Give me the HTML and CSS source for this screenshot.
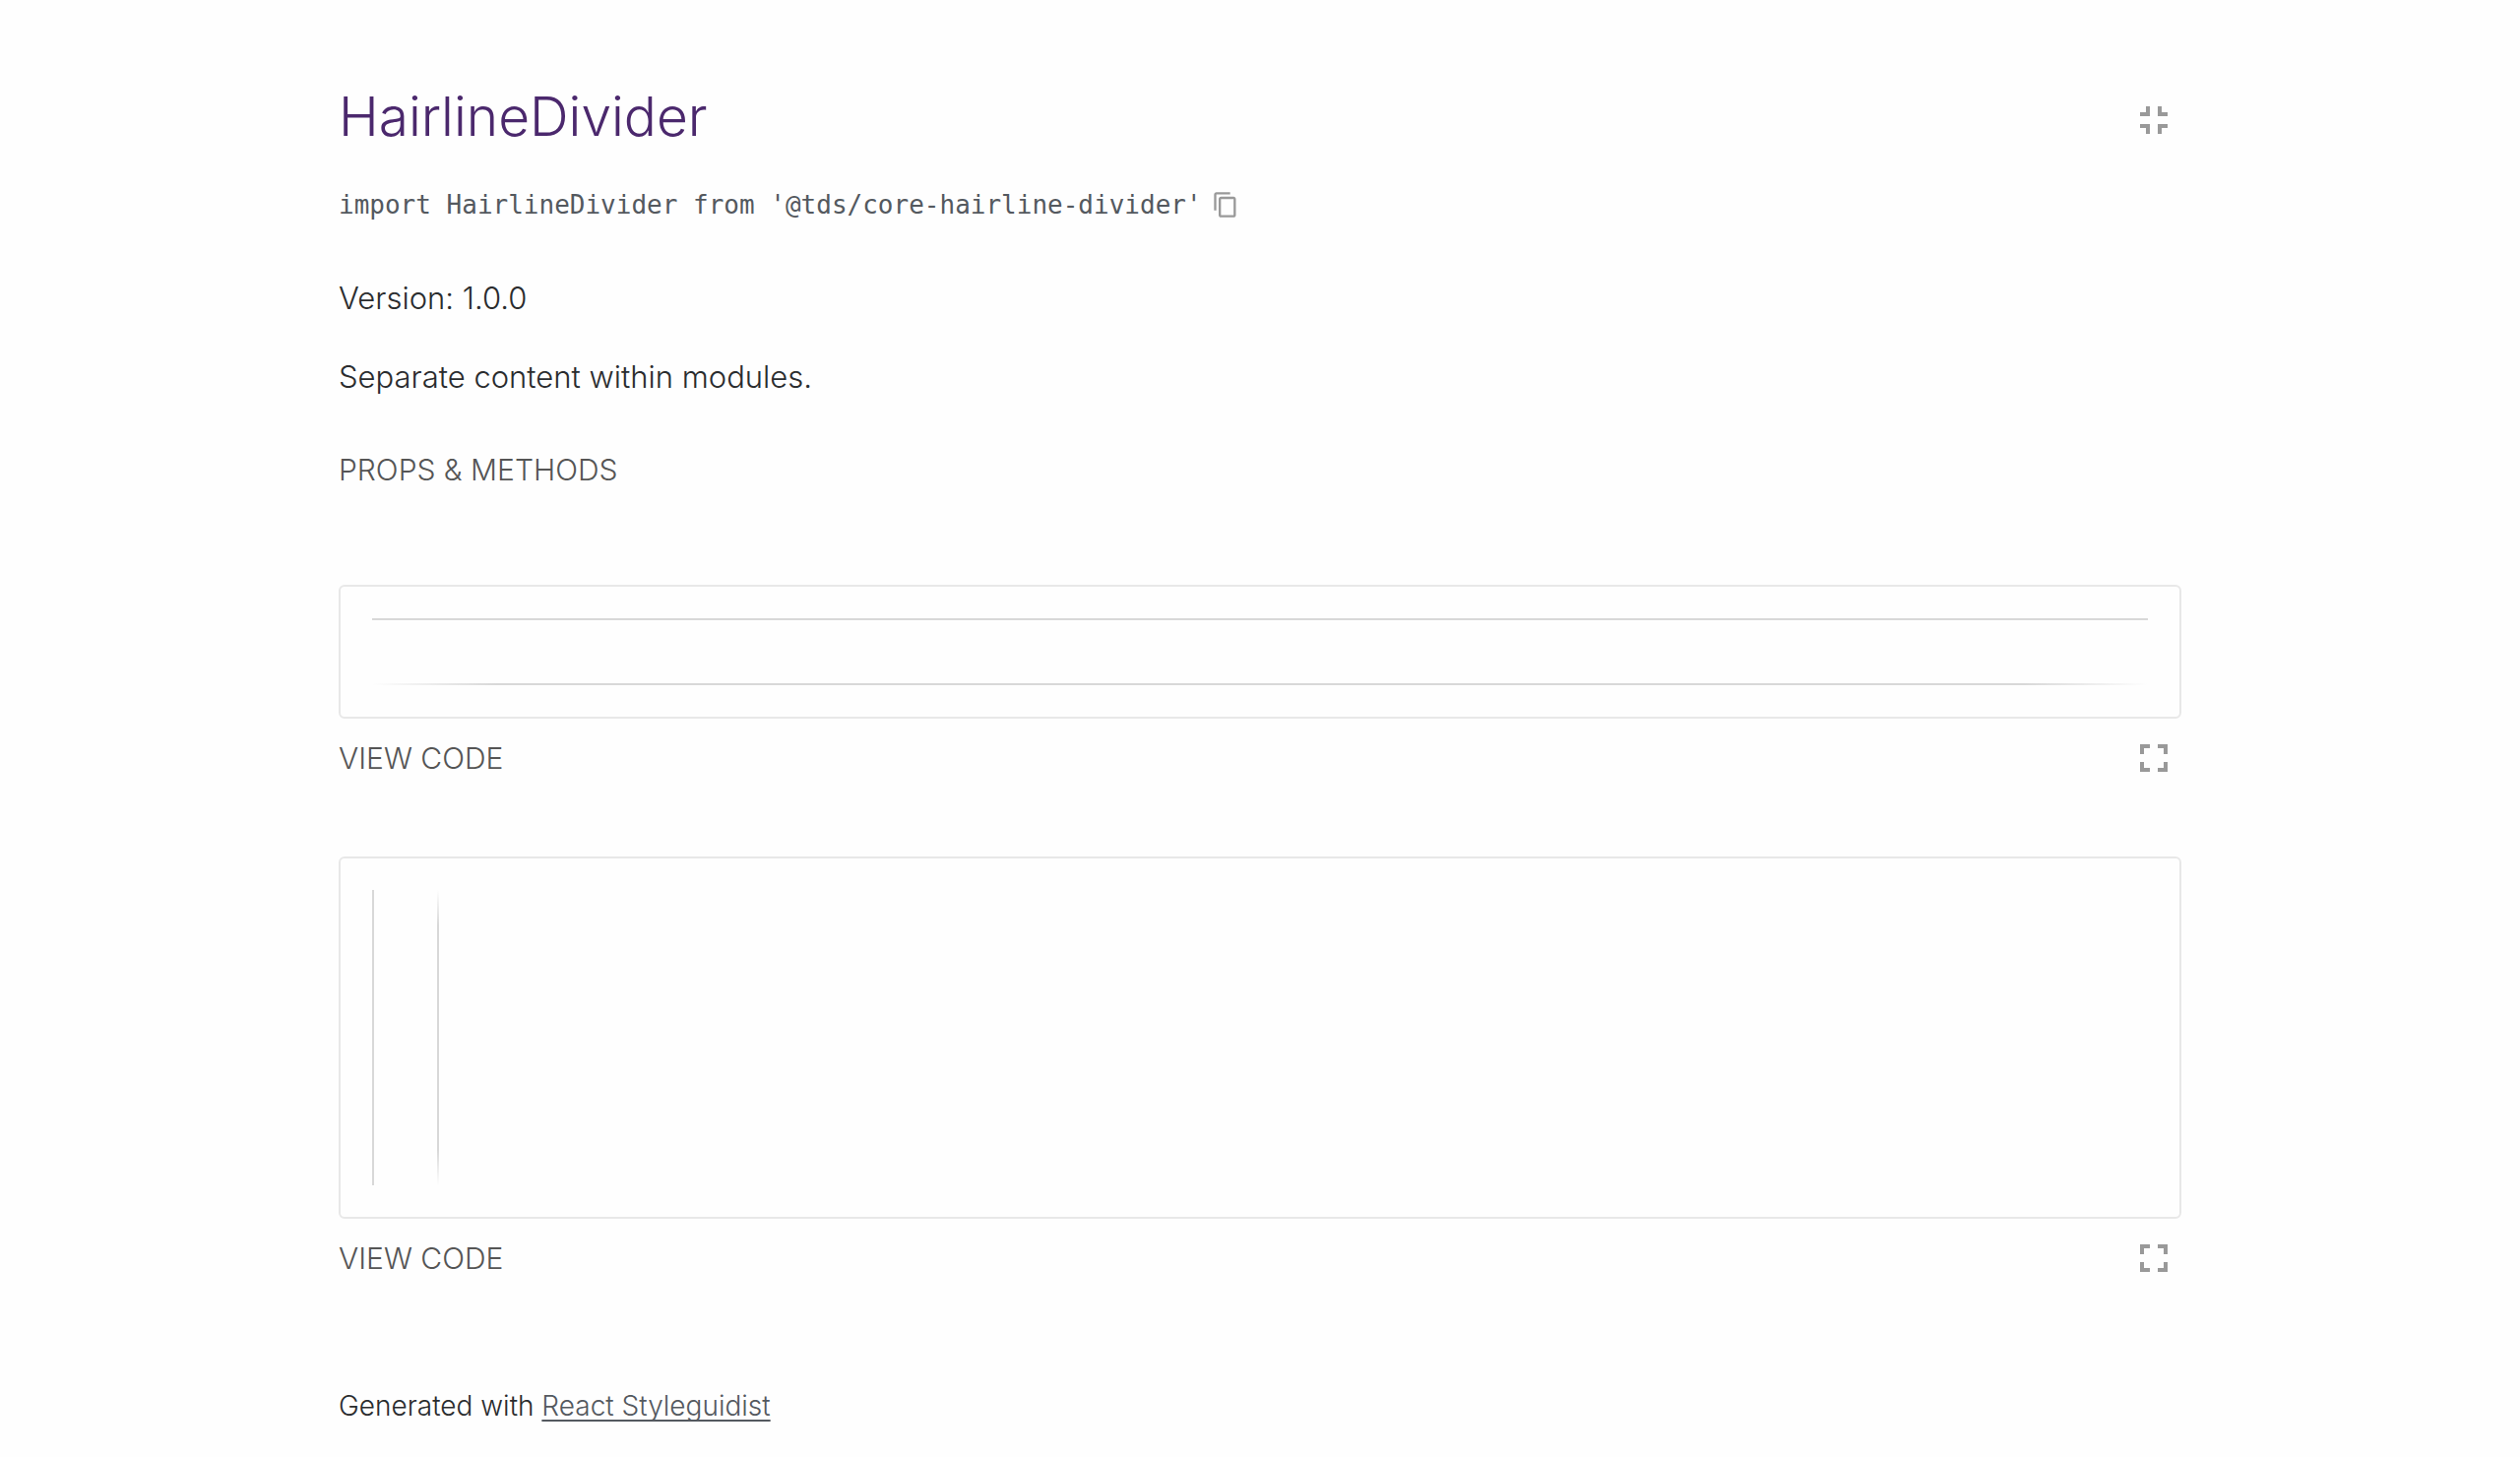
FILE: index.html
```
<!DOCTYPE html>
<html lang="en">
<head>
<meta charset="utf-8">
<meta name="viewport" content="width=device-width, initial-scale=1">
<title>HairlineDivider</title>
<link rel="stylesheet" href="styles.css">
</head>
<body>
<main class="page">
  <section class="component">
    <header class="component-header">
      <h1 class="component-title">HairlineDivider</h1>
      <button class="icon-button header-button" type="button" aria-label="Exit isolation mode">
        <svg class="icon" viewBox="0 0 24 24" aria-hidden="true"><path d="M5 16h3v3h2v-5H5v2zm3-8H5v2h5V5H8v3zm6 11h2v-3h3v-2h-5v5zm2-11V5h-2v5h5V8h-3z"/></svg>
      </button>
    </header>
    <div class="import">
      <code class="import-code">import HairlineDivider from '@tds/core-hairline-divider'</code>
      <button class="icon-button" type="button" aria-label="Copy to clipboard">
        <svg class="icon icon-small" viewBox="0 0 24 24" aria-hidden="true"><path d="M16 1H4c-1.1 0-2 .9-2 2v14h2V3h12V1zm3 4H8c-1.1 0-2 .9-2 2v14c0 1.1.9 2 2 2h11c1.1 0 2-.9 2-2V7c0-1.1-.9-2-2-2zm0 16H8V7h11v14z"/></svg>
      </button>
    </div>
    <div class="description">
      <p class="text">Version: 1.0.0</p>
      <p class="text">Separate content within modules.</p>
    </div>
    <button class="tab-button" type="button">PROPS &amp; METHODS</button>
  </section>

  <div class="examples">
    <section class="example">
      <div class="preview preview-rows">
        <hr class="divider">
        <hr class="divider divider-gradient">
      </div>
      <div class="toolbar">
        <button class="tab-button" type="button">VIEW CODE</button>
        <button class="icon-button" type="button" aria-label="Open isolated">
          <svg class="icon" viewBox="0 0 24 24" aria-hidden="true"><path d="M7 14H5v5h5v-2H7v-3zm-2-4h2V7h3V5H5v5zm12 7h-3v2h5v-5h-2v3zM14 5v2h3v3h2V5h-5z"/></svg>
        </button>
      </div>
    </section>
    <section class="example">
      <div class="preview preview-columns">
        <hr class="divider-vertical">
        <hr class="divider-vertical divider-vertical-gradient">
      </div>
      <div class="toolbar">
        <button class="tab-button" type="button">VIEW CODE</button>
        <button class="icon-button" type="button" aria-label="Open isolated">
          <svg class="icon" viewBox="0 0 24 24" aria-hidden="true"><path d="M7 14H5v5h5v-2H7v-3zm-2-4h2V7h3V5H5v5zm12 7h-3v2h5v-5h-2v3zM14 5v2h3v3h2V5h-5z"/></svg>
        </button>
      </div>
    </section>
  </div>

  <footer class="footer">Generated with <a class="footer-link" href="#">React Styleguidist</a></footer>
</main>
</body>
</html>
```
FILE: styles.css
```
* {
  box-sizing: border-box;
}

body {
  margin: 0;
  background: #fefefe;
  color: #2a2c2e;
  font-family: Inter, "Liberation Sans", sans-serif;
  font-weight: 300;
}

.page {
  max-width: 1936px;
  margin: 0 auto;
  padding: 88px 32px 32px;
}

.component-header {
  display: flex;
  align-items: center;
  justify-content: space-between;
}

.component-title {
  margin: 0;
  color: #4b286d;
  font-size: 55px;
  font-weight: 300;
  line-height: 60px;
}

.header-button {
  margin-top: 8px;
}

.header-button,
.toolbar .icon-button {
  margin-right: 4px;
}

.icon-button {
  display: block;
  padding: 0;
  border: 0;
  background: none;
  color: #999;
  cursor: pointer;
}

.icon {
  display: block;
  width: 48px;
  height: 48px;
  fill: currentColor;
}

.icon-small {
  width: 28px;
  height: 28px;
}

.import {
  display: flex;
  align-items: center;
  gap: 10px;
  margin-top: 45px;
}

.import-code {
  color: #54595f;
  font-family: "DejaVu Sans Mono", monospace;
  font-size: 26px;
  font-weight: 400;
  line-height: 30px;
}

.description {
  display: grid;
  gap: 32px;
  margin: 56px 0 50px;
}

.text {
  margin: 0;
  font-size: 31px;
  line-height: 48px;
}

.tab-button {
  display: block;
  padding: 0;
  border: 0;
  background: none;
  color: #555;
  font-family: inherit;
  font-size: 30px;
  font-weight: 300;
  line-height: 40px;
  cursor: pointer;
}

.examples {
  display: grid;
  gap: 76px;
  margin-top: 97px;
}

.preview {
  display: flex;
  gap: 64px;
  padding: 32px;
  border: 2px solid #e8e8e8;
  border-radius: 6px;
}

.preview-rows {
  flex-direction: column;
}

.divider,
.divider-vertical {
  margin: 0;
  border: 0;
  background: #d8d8d8;
}

.divider {
  height: 2px;
}

.divider-gradient {
  background: linear-gradient(to right, rgba(216, 216, 216, 0), #d8d8d8 7%, #d8d8d8 93%, rgba(216, 216, 216, 0));
}

.divider-vertical {
  width: 2px;
  height: 300px;
}

.divider-vertical-gradient {
  background: linear-gradient(rgba(216, 216, 216, 0), #d8d8d8 12%, #d8d8d8 88%, rgba(216, 216, 216, 0));
}

.toolbar {
  display: flex;
  align-items: center;
  justify-content: space-between;
  margin-top: 16px;
}

.footer {
  margin-top: 106px;
  font-size: 28px;
  line-height: 40px;
}

.footer-link {
  color: #54595f;
  text-decoration-thickness: 2px;
  text-underline-offset: 4px;
  text-decoration-skip-ink: none;
}
```
